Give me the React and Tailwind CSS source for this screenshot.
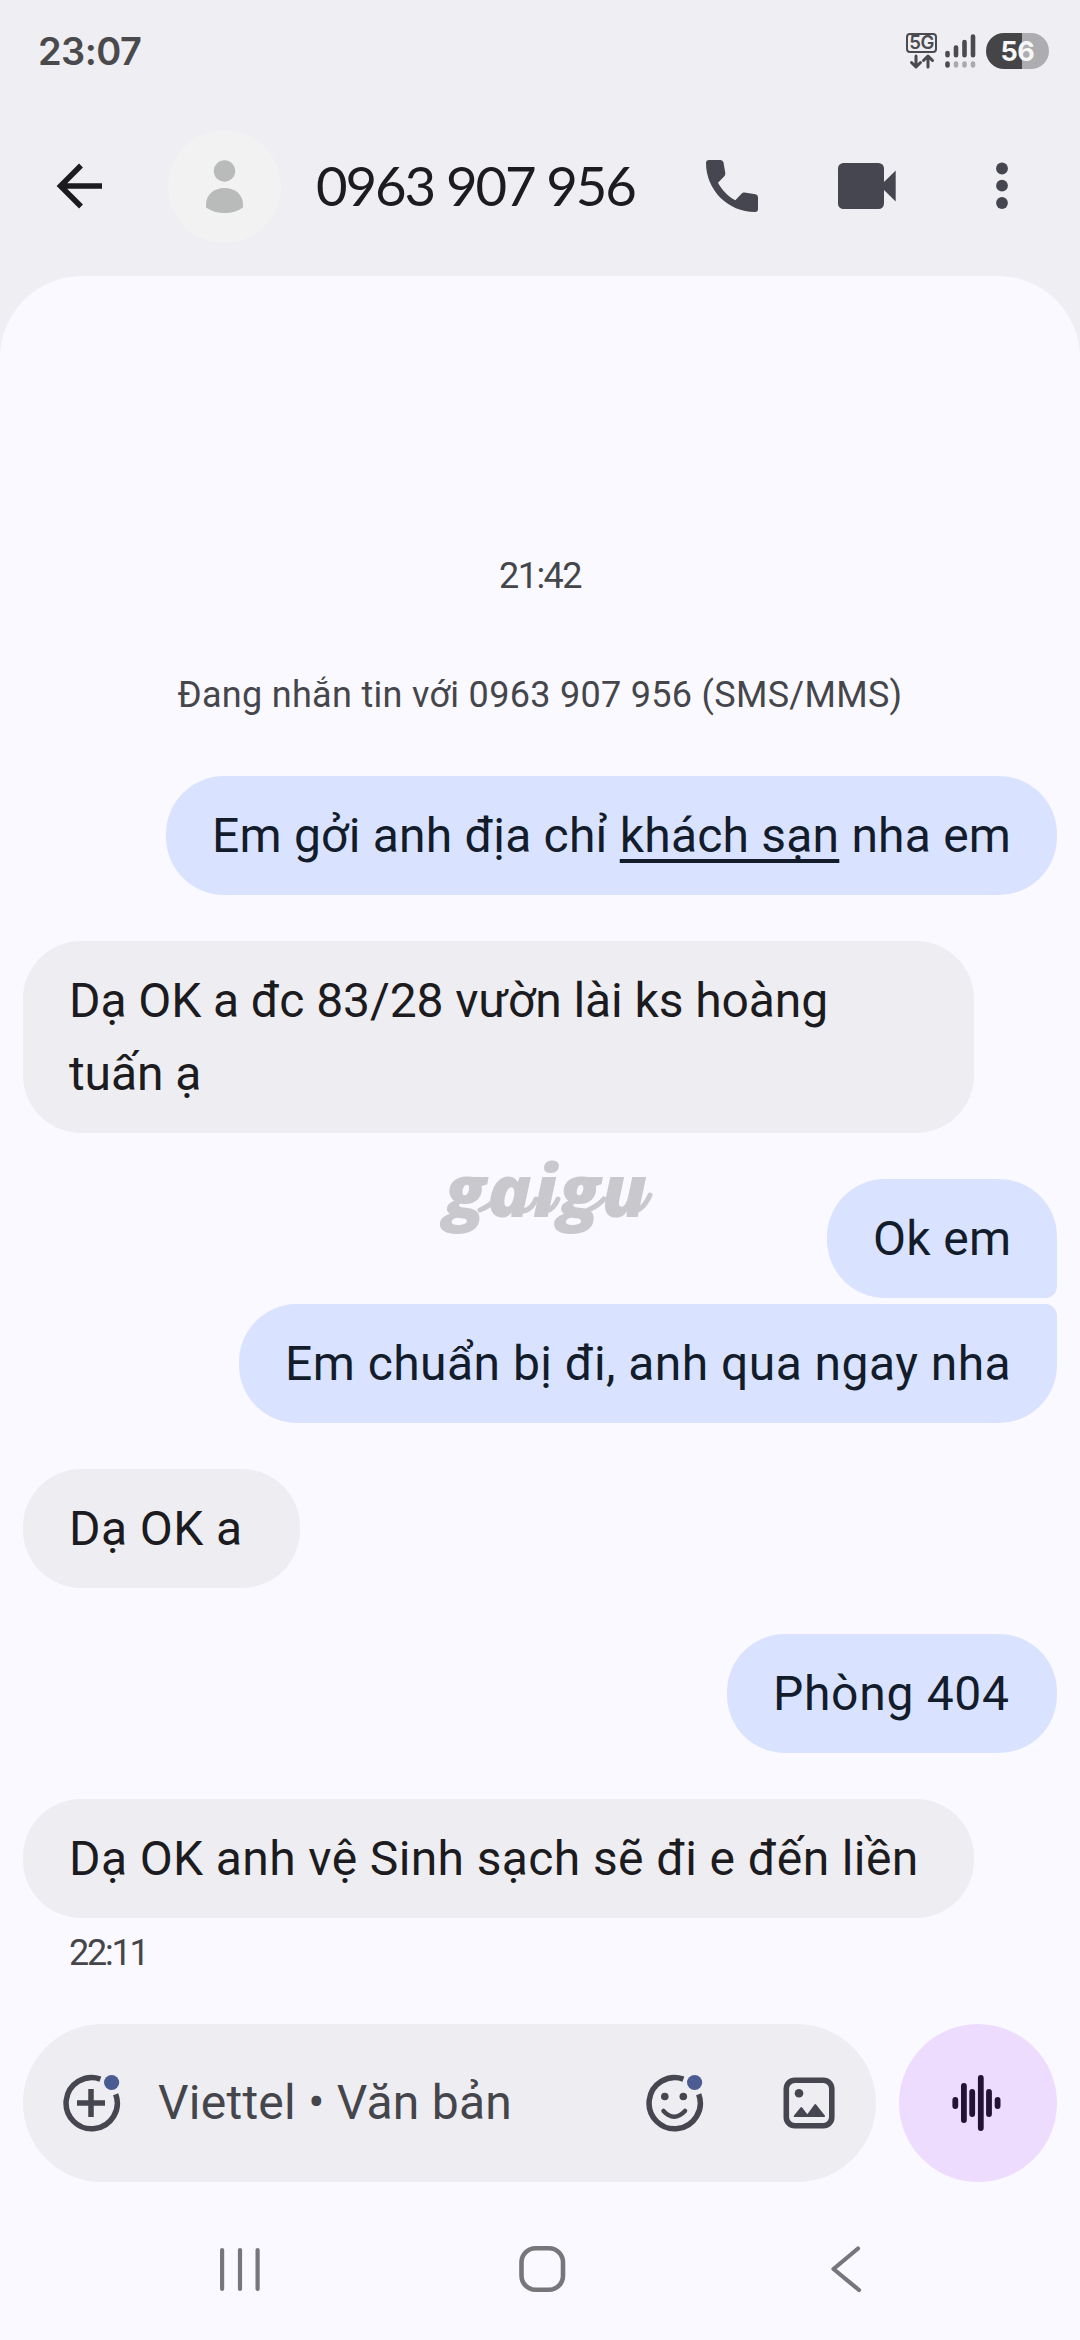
import React from 'react';

function StatusBar() {
  return (
    <div className="flex h-[102px] items-center justify-between pr-[31px] pl-[38px]">
      <span className="font-[Inter,sans-serif] text-[38px] font-semibold tracking-[-0.600px] text-[#4a4a4d]">23:07</span>
      <div className="flex items-center">
        <div className="mr-[7px] flex w-[31px] flex-col items-center">
          <span className="flex h-[20px] w-[31px] items-center justify-center rounded-[4px] border-2 border-[#4a4a4f] font-[Inter,sans-serif] text-[18.500px] leading-none font-semibold tracking-[-0.5px] text-[#4a4a4f]">5G</span>
          <svg className="h-[17px] w-[26px]" viewBox="0 0 26 17" fill="none" stroke="#4a4a4f" strokeWidth="3" strokeLinecap="round" strokeLinejoin="round">
            <path d="M7 3v11M2.500 9.500L7 14l4.500-4.500M19 14V3M14.500 7.500L19 3l4.500 4.500" />
          </svg>
        </div>
        <svg className="mr-[10px] h-[36px] w-[32px]" viewBox="0 0 32 36" strokeWidth="4.600" strokeLinecap="round" stroke="#4a4a4f">
          <path d="M3.500 20v2.200M12 14.500v7.700M20.500 9v13.200M29 3.500v18.700M3.500 30.500v2" />
          <path d="M12 30.500v2M20.500 30.500v2M29 30.500v2" stroke="#a9a9ae" />
        </svg>
        <div className="flex h-[36px] w-[63px] items-center justify-center rounded-full bg-linear-to-r from-[#454547] from-57% to-[#adadb1] to-57% font-[Inter,sans-serif] text-[27px] leading-none font-bold tracking-[-0.5px] text-[#f6f6f8]">
          56
        </div>
      </div>
    </div>
  );
}

function Header() {
  return (
    <header className="flex h-[174px] items-center pb-[6px] pl-[50px]">
      <svg className="h-[60px] w-[60px]" viewBox="0 0 60 60" fill="none" stroke="#1b1b20" strokeWidth="5.500">
        <path d="M52 30H10.500M31 9.500L10.500 30L31 50.500" />
      </svg>
      <svg className="ml-[58px] h-[113px] w-[113px]" viewBox="0 0 113 113">
        <circle cx="56.500" cy="56.500" r="56.500" fill="#f2f2f2" />
        <circle cx="56.500" cy="41" r="10.700" fill="#b8bbba" />
        <path d="M38 74.500C38 64.500 46 58 56.500 58S75 64.500 75 74.500v3Q67 83 56.500 83T38 77.500z" fill="#b8bbba" />
      </svg>
      <h1 className="ml-[35px] w-[350px] pb-[2px] font-[Lato,sans-serif] text-[54.500px] leading-none tracking-[-2.100px] whitespace-nowrap text-[#1b1b20]">0963 907 956</h1>
      <svg className="ml-[39px] h-[54px] w-[54px]" viewBox="0 0 54 54" fill="#45464f">
        <path d="M4 1H15.500q2.500 0 3 2.500L20.300 14q.3 2-1 3.300L13 23.700C17 31 23 37.500 30.300 41.300L36.500 34.700q1.300-1.500 3-1.200L50.500 35.300q2.500.500 2.500 3V50q0 3-3 3C23 53 1 31 1 4Q1 1 4 1z" />
      </svg>
      <svg className="ml-[78px] h-[60px] w-[60px]" viewBox="0 0 60 60" fill="#45464f">
        <rect x="1" y="7" width="46" height="46" rx="5.500" />
        <path d="M46 27L58.700 14.500v31L46 33z" />
      </svg>
      <svg className="ml-[98px] h-[60px] w-[14px]" viewBox="0 0 14 60" fill="#45464f">
        <circle cx="7" cy="12.500" r="5.900" />
        <circle cx="7" cy="29.700" r="5.900" />
        <circle cx="7" cy="47" r="5.900" />
      </svg>
    </header>
  );
}

function Bubble({ mine, className, children }) {
  return (
    <div
      className={
        (mine ? 'self-end bg-[#d9e2ff] text-[#131c2b] ' : 'self-start bg-[#eeedf2] text-[#1b1b20] ') +
        'px-[46px] py-[23px] text-[48px] leading-[73px] whitespace-nowrap ' +
        className
      }
    >
      {children}
    </div>
  );
}

function Watermark() {
  return (
    <div className="absolute top-[1139px] left-[444px] font-['Open_Sans',sans-serif] text-[73px] leading-[100px] font-extrabold tracking-[1.500px] text-[#c9c8cd] italic">
      gaigu
      <svg className="absolute top-[36px] left-0 h-[44px] w-[212px]" viewBox="0 0 212 44" fill="none" stroke="#c9c8cd" strokeWidth="5" strokeLinecap="round">
        <path d="M186 36Q198 38 206 20M36 35Q46 31 52 24M80 36Q88 34 92 24M102 36Q110 34 114 24M144 35Q154 31 160 24" />
      </svg>
    </div>
  );
}

function Composer() {
  return (
    <div className="mt-[47px] flex gap-[23px]">
      <div className="flex h-[158px] w-[853px] items-center rounded-full bg-[#eeedf2] pl-[38px]">
        <svg className="h-[60px] w-[60px]" viewBox="0 0 60 60" fill="none" stroke="#45464f" strokeWidth="5.500">
          <path d="M39.400 6.100A25.600 25.600 0 1 0 54.700 21.300M30 16v28M16 30h28" />
          <circle cx="50.600" cy="9.500" r="7.600" fill="#4b5c92" stroke="none" />
        </svg>
        <span className="ml-[37px] w-[486px] text-[48px] tracking-[0.250px] whitespace-nowrap text-[#45464b]">Viettel • Văn bản</span>
        <svg className="h-[60px] w-[60px]" viewBox="0 0 60 60" fill="none" stroke="#45464f" strokeWidth="5.500">
          <path d="M39.400 6.100A25.600 25.600 0 1 0 54.700 21.300" />
          <path d="M19.500 38Q30 49.500 41 38" strokeWidth="4.500" strokeLinecap="round" />
          <circle cx="20.800" cy="23.500" r="3.800" fill="#45464f" stroke="none" />
          <circle cx="39.300" cy="23.500" r="3.800" fill="#45464f" stroke="none" />
          <circle cx="50.600" cy="9.500" r="7.600" fill="#4b5c92" stroke="none" />
        </svg>
        <svg className="ml-[75px] h-[60px] w-[60px]" viewBox="0 0 60 60" fill="#45464f">
          <rect x="7.300" y="7.300" width="45.500" height="45.500" rx="8.500" fill="none" stroke="#45464f" strokeWidth="5.600" />
          <circle cx="20" cy="20.200" r="4.300" />
          <path d="M15.500 44q-1.500 0-.5-1.500l6.500-8q.8-1 1.600 0l5.200 6.700 7.200-9.600q.8-1 1.600 0l8.700 11q1 1.400-.6 1.400z" />
        </svg>
      </div>
      <div className="flex h-[158px] w-[158px] items-center justify-center rounded-full bg-[#eedcfe]">
        <svg className="h-[60px] w-[60px]" viewBox="0 0 60 60" stroke="#241335" strokeWidth="5.800" strokeLinecap="round">
          <path d="M7.300 27v6M15.900 13v34M24.200 19v22M32.800 5v50M41 19v22M49.600 27v6" />
        </svg>
      </div>
    </div>
  );
}

function NavBar() {
  return (
    <nav className="mt-[58px] flex items-center text-[#77777b]">
      <svg className="ml-[187px] h-[60px] w-[60px]" viewBox="0 0 60 60" stroke="currentColor" strokeWidth="4.200" strokeLinecap="round">
        <path d="M12.100 10v39M30 10v39M47.600 10v39" />
      </svg>
      <svg className="ml-[242px] h-[60px] w-[60px]" viewBox="0 0 60 60" fill="none" stroke="currentColor" strokeWidth="4.600">
        <rect x="9.500" y="8.300" width="41.500" height="41.500" rx="14" />
      </svg>
      <svg className="ml-[255px] h-[60px] w-[60px]" viewBox="0 0 60 60" fill="none" stroke="currentColor" strokeWidth="4.200" strokeLinecap="round" strokeLinejoin="round">
        <path d="M31 8.500L6.500 29L32 50" />
      </svg>
    </nav>
  );
}

export default function App() {
  return (
    <div className="relative h-[2340px] w-[1080px] overflow-hidden bg-[#eeeef3] font-[Roboto,sans-serif]">
      <StatusBar />
      <Header />
      <main className="flex h-[2064px] flex-col rounded-t-[82px] bg-[#faf9ff] px-[23px] pt-[276px]">
        <div className="text-center text-[36px] leading-[48px] tracking-[-1.500px] text-[#45464b]">21:42</div>
        <div className="mt-[71px] text-center text-[36px] leading-[48px] tracking-[0.300px] text-[#45464b]">
          Đang nhắn tin với 0963 907 956 (SMS/MMS)
        </div>
        <div className="mt-[57px] flex flex-col">
          <Bubble mine className="w-[891px] rounded-[58px] tracking-[0.200px]">
            Em gởi anh địa chỉ{' '}
            <span className="underline decoration-4 underline-offset-[7px] [text-decoration-skip-ink:none]">khách sạn</span> nha em
          </Bubble>
          <Bubble className="mt-[46px] w-[951px] rounded-[58px] tracking-[-0.100px]">
            Dạ OK a đc 83/28 vườn lài ks hoàng
            <br />
            tuấn ạ
          </Bubble>
          <Bubble mine className="mt-[46px] w-[230px] rounded-[58px] rounded-br-[12px] tracking-[0.300px]">Ok em</Bubble>
          <Bubble mine className="mt-[6px] w-[818px] rounded-[58px] rounded-tr-[12px] tracking-[0.450px]">
            Em chuẩn bị đi, anh qua ngay nha
          </Bubble>
          <Bubble className="mt-[46px] w-[277px] rounded-[58px] tracking-[0.400px]">Dạ OK a</Bubble>
          <Bubble mine className="mt-[46px] w-[330px] rounded-[58px] tracking-[0.700px]">Phòng 404</Bubble>
          <Bubble className="mt-[46px] w-[951px] rounded-[58px] tracking-[0.380px]">
            Dạ OK anh vệ Sinh sạch sẽ đi e đến liền
          </Bubble>
        </div>
        <div className="mt-[11px] pl-[46px] text-[36px] leading-[48px] tracking-[-2.200px] text-[#45464b]">22:11</div>
        <Composer />
        <NavBar />
      </main>
      <Watermark />
    </div>
  );
}
